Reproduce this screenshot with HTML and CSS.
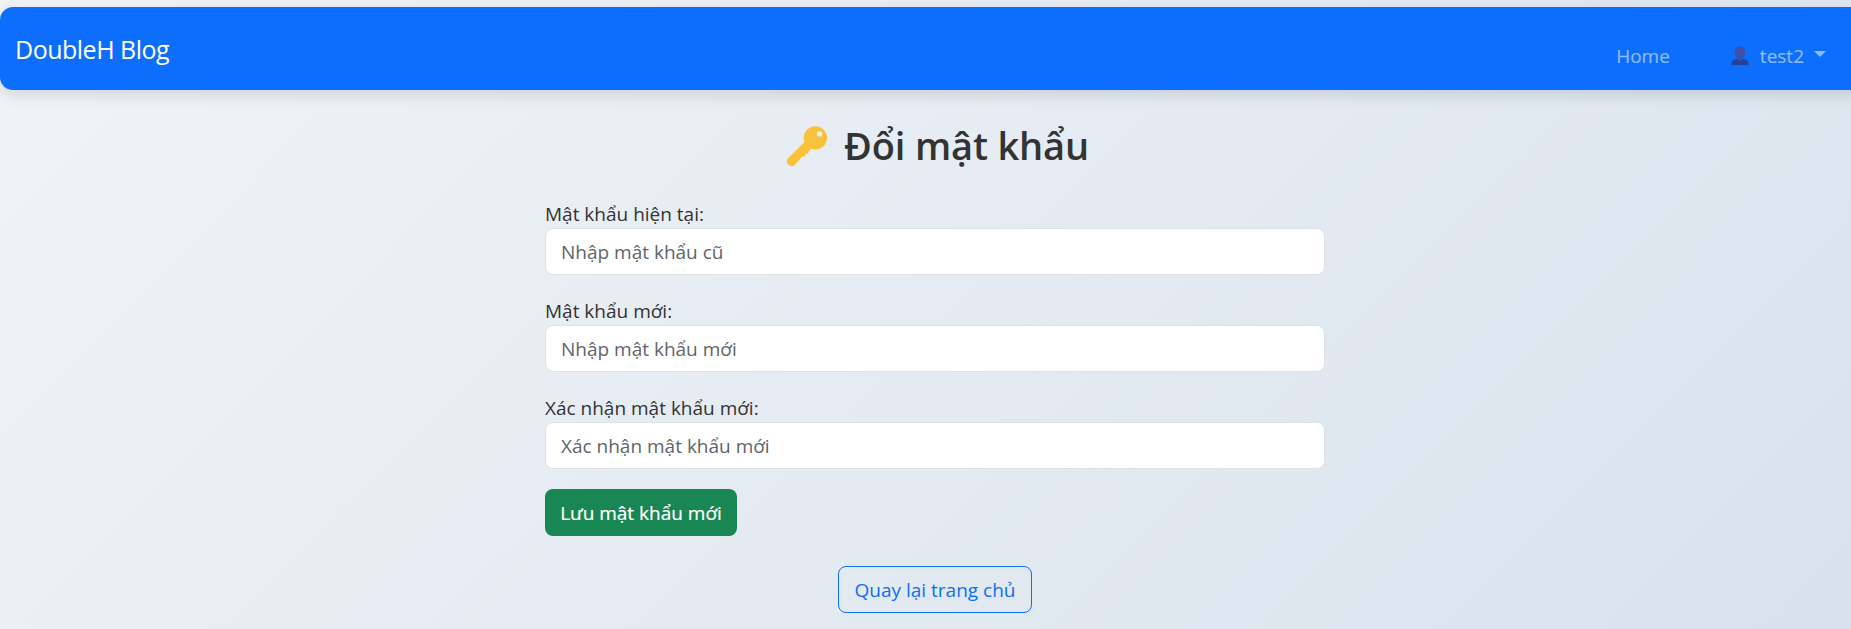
FILE: index.html
```html
<!DOCTYPE html>
<html lang="vi">
<head>
<meta charset="utf-8">
<title>Đổi mật khẩu</title>
<link rel="stylesheet" href="styles.css">
</head>
<body>
<nav class="navbar">
  <a class="brand"><span>DoubleH Blog</span></a>
  <div class="nav-links">
    <a class="nav-link home">Home</a>
    <a class="nav-link user">
      <svg class="user-icon" viewBox="0 0 18 19"><path class="bust" d="M0 19Q0.5 13.4 5 13.1H13Q17.500 13.4 18 19Z"/><path class="head" d="M9 0.500C12.500 0.500 14.500 3 14 6.500C14 9.500 12.500 11.500 11.300 12.200V13.600L9 15.400L6.700 13.600V12.200C5.500 11.500 4 9.500 4 6.500C3.500 3 5.500 0.500 9 0.500Z"/></svg>
      <span class="user-name">test2</span>
      <span class="caret"></span>
    </a>
  </div>
</nav>
<main class="container">
  <h2 class="title">
    <svg class="key-icon" viewBox="0 0 40 40"><path fill-rule="evenodd" d="M28.500 0.300A11.300 11.300 0 1 1 24.800 22.200L22 24.800L21.800 26.800L19 27L18.500 29.800L15.500 29.800L14 32.200L8.500 38A4.600 4.600 0 0 1 1.800 31.800L18 15.600A11.300 11.300 0 0 1 28.500 0.300ZM32.700 5A2.700 2.700 0 1 0 32.700 10.400A2.700 2.700 0 1 0 32.700 5Z"/></svg>
    <span>Đổi mật khẩu</span>
  </h2>
  <form class="form">
    <div class="field">
      <label class="label" for="old">Mật khẩu hiện tại:</label>
      <input class="input" id="old" type="password" placeholder="Nhập mật khẩu cũ">
    </div>
    <div class="field">
      <label class="label" for="new">Mật khẩu mới:</label>
      <input class="input" id="new" type="password" placeholder="Nhập mật khẩu mới">
    </div>
    <div class="field">
      <label class="label" for="confirm">Xác nhận mật khẩu mới:</label>
      <input class="input" id="confirm" type="password" placeholder="Xác nhận mật khẩu mới">
    </div>
    <button class="btn btn-success" type="button">Lưu mật khẩu mới</button>
  </form>
  <a class="btn btn-outline">Quay lại trang chủ</a>
</main>
</body>
</html>
```
FILE: styles.css
```css
* { box-sizing: border-box; }
html { height: 100%; overflow: hidden; }
body {
  margin: 0;
  height: 629px;
  padding-top: 7px;
  overflow: hidden;
  background: linear-gradient(135deg, #f0f4f8, #d9e2ec);
  color: #333;
  font-family: "Open Sans", "Noto Sans", sans-serif;
  font-size: 19px;
  line-height: 30px;
}
.navbar {
  display: flex;
  justify-content: space-between;
  width: 1864px;
  height: 83px;
  padding: 0 38px 0 15px;
  border-radius: 13px;
  background: #0d6efd;
  box-shadow: 0 5px 15px rgba(0, 0, 0, 0.12);
}
.brand {
  padding-top: 23px;
  color: #fff;
  font-size: 25px;
  line-height: 38px;
  letter-spacing: -0.5px;
}
.nav-links { display: flex; padding-top: 34px; }
.nav-link { color: #8bbafe; -webkit-text-stroke: 0.2px #8bbafe; }
.home { margin-right: 61px; }
.user { display: flex; align-items: flex-start; }
.user-icon { width: 18px; height: 19px; margin: 5px 11px 0 0; }
.user-icon path { -webkit-text-stroke: 0; }
.head { fill: #3f4fa6; }
.bust { fill: #24429a; }
.caret {
  margin: 10px 0 0 10px;
  border: 6px solid transparent;
  border-top-color: #8bbafe;
  border-bottom: 0;
}
.container {
  display: flex;
  flex-direction: column;
  align-items: center;
  width: 780px;
  margin: 31px 0 0 545px;
}
.title {
  display: flex;
  align-items: center;
  width: 302px;
  height: 48px;
  margin: 0 0 30px 4px;
  gap: 17px;
  font-size: 38px;
  font-weight: 600;
  line-height: 48px;
  letter-spacing: -0.15px;
  white-space: nowrap;
}
.key-icon { flex: none; width: 41px; height: 41px; margin-top: 2px; fill: #f9c23c; }
.form { width: 780px; }
.field { margin-bottom: 21px; }
.field:last-of-type { margin-bottom: 20px; }
.label { display: block; height: 29px; line-height: 30px; }
.input {
  display: block;
  width: 780px;
  height: 47px;
  padding: 0 15px;
  border: 1px solid #dee2e6;
  border-radius: 8px;
  background: #fff;
  font: inherit;
}
.input::placeholder { color: #5f656b; opacity: 1; }
.btn {
  display: flex;
  align-items: center;
  justify-content: center;
  height: 47px;
  border-radius: 8px;
  font: inherit;
  white-space: nowrap;
}
.btn-success { width: 192px; border: 0; background: #198754; color: #fff; -webkit-text-stroke: 0.2px #fff; }
.btn-outline { width: 194px; margin-top: 30px; border: 1px solid #0d6efd; color: #0d6efd; }
```
